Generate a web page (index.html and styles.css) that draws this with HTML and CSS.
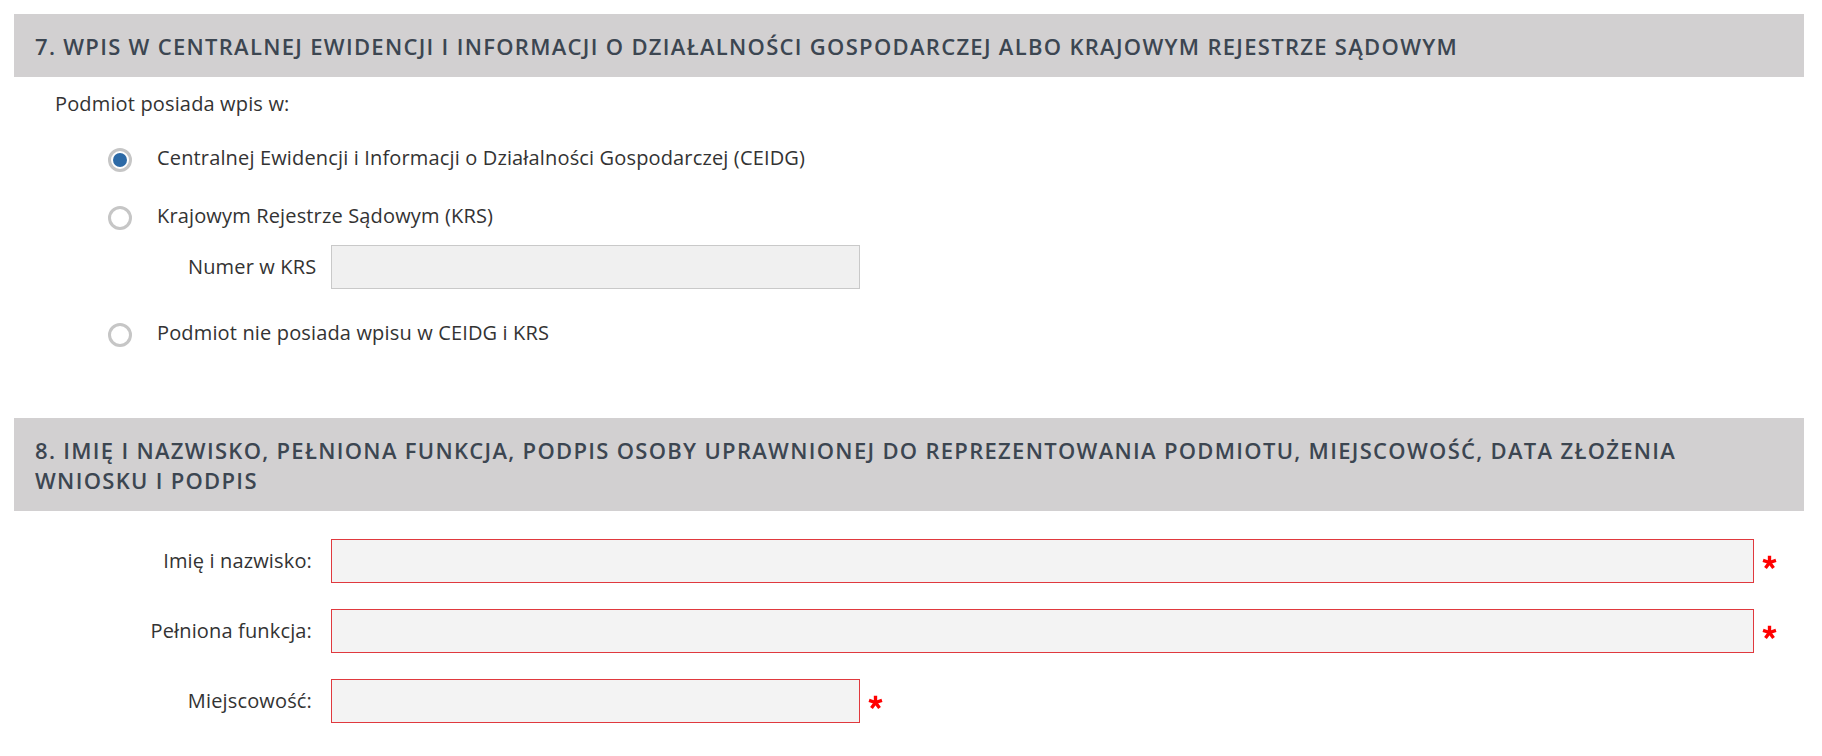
FILE: index.html
```html
<!DOCTYPE html>
<html lang="pl">
<head>
    <meta charset="UTF-8">
    <meta name="viewport" content="width=device-width, initial-scale=1.0">
    <title>Wniosek</title>
    <link rel="stylesheet" href="styles.css">
</head>
<body>
    <div class="page">
        <section class="section">
            <h2 class="section-title">7. Wpis w Centralnej Ewidencji i Informacji o Działalności Gospodarczej albo Krajowym Rejestrze Sądowym</h2>
            <div class="section-body">
                <p class="intro">Podmiot posiada wpis w:</p>
                <div class="options">
                    <label class="option option-first">
                        <span class="radio checked"></span>
                        <span>Centralnej Ewidencji i Informacji o Działalności Gospodarczej (CEIDG)</span>
                    </label>
                    <label class="option">
                        <span class="radio"></span>
                        <span>Krajowym Rejestrze Sądowym (KRS)</span>
                    </label>
                    <div class="krs-row">
                        <span class="krs-label">Numer w KRS</span>
                        <input type="text" class="field field-short">
                    </div>
                    <label class="option">
                        <span class="radio"></span>
                        <span>Podmiot nie posiada wpisu w CEIDG i KRS</span>
                    </label>
                </div>
            </div>
        </section>

        <section class="section section-next">
            <h2 class="section-title">8. Imię i nazwisko, pełniona funkcja, podpis osoby uprawnionej do reprezentowania podmiotu, miejscowość, data złożenia wniosku i podpis</h2>
            <div class="form-rows">
                <div class="form-row">
                    <label class="form-label">Imię i nazwisko:</label>
                    <input type="text" class="field field-long field-required">
                    <span class="required"><svg viewBox="0 0 16 16" width="15" height="15"><path d="M8 8V0.8M8 8L14.9 5.8M8 8L12.3 13.8M8 8L3.7 13.8M8 8L1.1 5.8" stroke="#ff0000" stroke-width="3.6"/></svg></span>
                </div>
                <div class="form-row">
                    <label class="form-label">Pełniona funkcja:</label>
                    <input type="text" class="field field-long field-required">
                    <span class="required"><svg viewBox="0 0 16 16" width="15" height="15"><path d="M8 8V0.8M8 8L14.9 5.8M8 8L12.3 13.8M8 8L3.7 13.8M8 8L1.1 5.8" stroke="#ff0000" stroke-width="3.6"/></svg></span>
                </div>
                <div class="form-row">
                    <label class="form-label">Miejscowość:</label>
                    <input type="text" class="field field-short field-required">
                    <span class="required"><svg viewBox="0 0 16 16" width="15" height="15"><path d="M8 8V0.8M8 8L14.9 5.8M8 8L12.3 13.8M8 8L3.7 13.8M8 8L1.1 5.8" stroke="#ff0000" stroke-width="3.6"/></svg></span>
                </div>
            </div>
        </section>
    </div>
</body>
</html>
```

FILE: styles.css
```css
body {
    margin: 0;
    font-family: "Open Sans", "Noto Sans", sans-serif;
    font-size: 20px;
    letter-spacing: 0.15px;
    color: #333;
    background: #fff;
}
.page {
    padding: 14px 18px 0 14px;
}
.section-title {
    margin: 0;
    padding: 17px 21px 16px;
    background-color: #d2d0d1;
    color: #3c4651;
    font-size: 22px;
    font-weight: 600;
    line-height: 30px;
    letter-spacing: 1.3px;
    text-transform: uppercase;
}
.section-next {
    margin-top: 71px;
}
.section-body {
    padding-left: 41px;
}
.intro {
    margin: 13px 0 0;
    line-height: 28px;
}
.options {
    padding-left: 53px;
}
.option {
    display: flex;
    align-items: center;
    line-height: 28px;
    margin-top: 30px;
    cursor: pointer;
}
.option-first {
    margin-top: 26px;
}
.radio {
    box-sizing: border-box;
    width: 24px;
    height: 24px;
    margin-top: 4px;
    margin-right: 25px;
    border: 3px solid #c6c6c6;
    border-radius: 50%;
    background: #fff;
    display: flex;
    align-items: center;
    justify-content: center;
}
.radio.checked::after {
    content: "";
    width: 14px;
    height: 14px;
    border-radius: 50%;
    background: #2d6aa6;
}
.krs-row {
    display: flex;
    align-items: center;
    margin-top: 15px;
    padding-left: 80px;
}
.krs-label {
    flex: 0 0 143px;
    line-height: 28px;
}
.field {
    box-sizing: border-box;
    height: 44px;
    border: 1px solid #c9c9c9;
    background-color: #f0f0f0;
    font: inherit;
    padding: 0 10px;
}
.field-short {
    width: 529px;
}
.field-long {
    width: 1423px;
}
.field-required {
    border-color: #e0393e;
    background-color: #f3f3f3;
}
.form-rows {
    padding-top: 28px;
}
.form-row {
    display: flex;
    align-items: center;
    margin-bottom: 26px;
}
.form-label {
    flex: 0 0 317px;
    box-sizing: border-box;
    padding-right: 19px;
    text-align: right;
    line-height: 28px;
}
.required {
    display: flex;
    margin-left: 8px;
    margin-top: 2px;
}
```
